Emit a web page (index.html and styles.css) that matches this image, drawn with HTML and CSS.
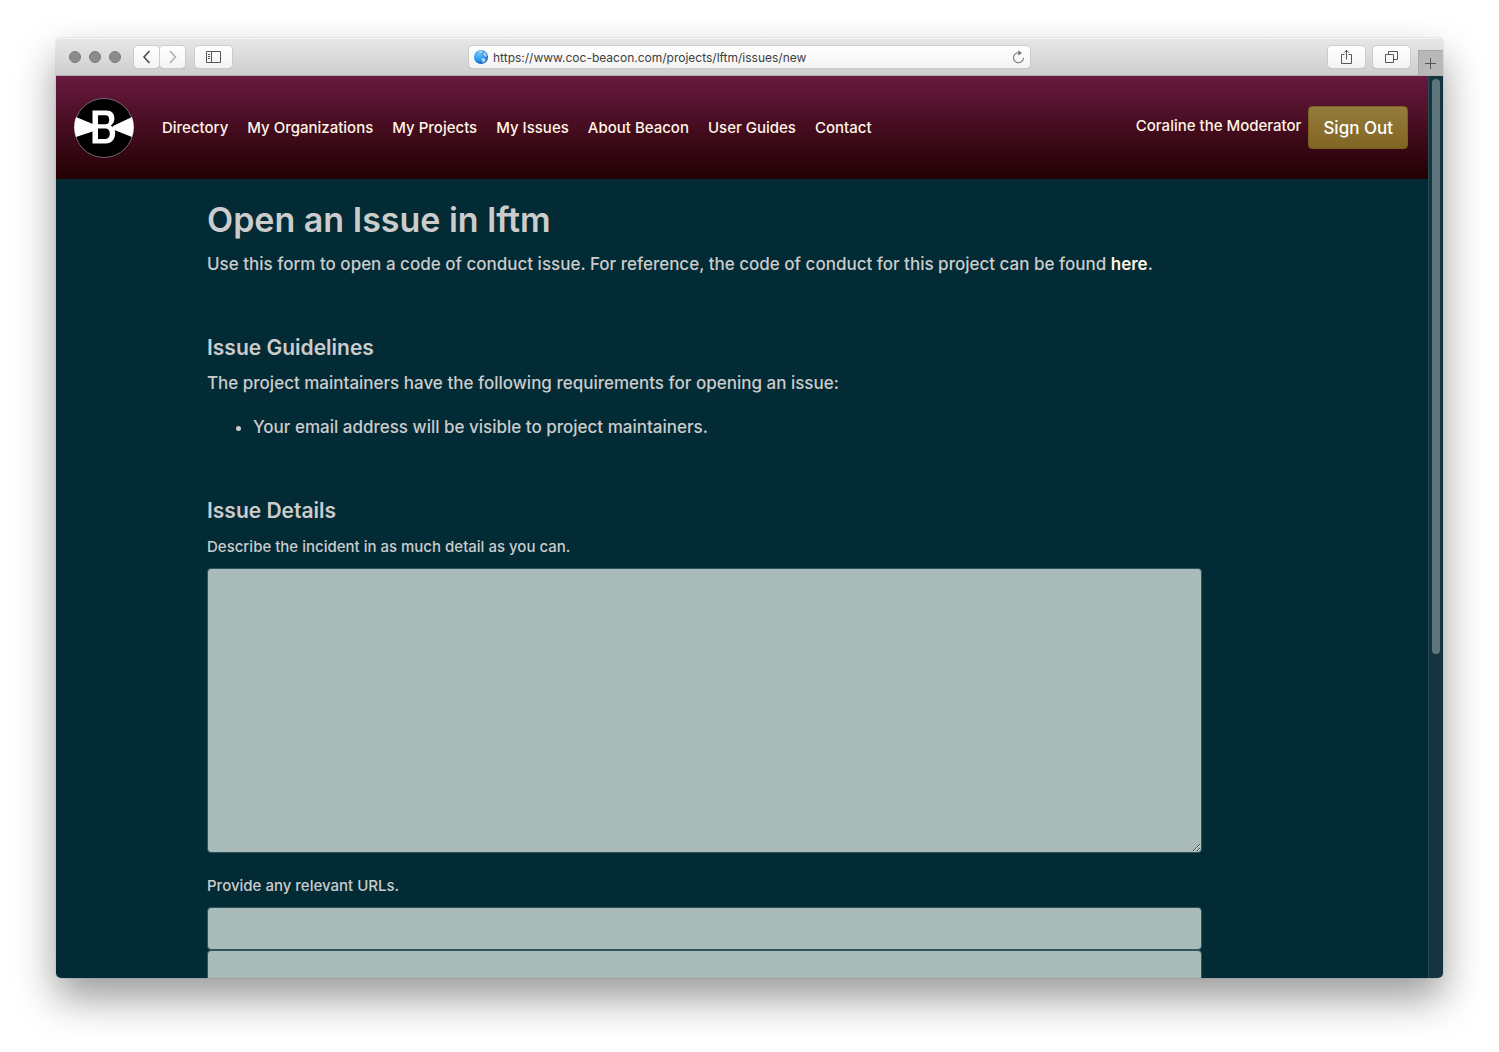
FILE: index.html
```html
<!DOCTYPE html>
<html lang="en">
<head>
<meta charset="utf-8">
<meta name="viewport" content="width=device-width, initial-scale=1">
<title>Open an Issue in lftm</title>
<link rel="stylesheet" href="styles.css">
</head>
<body>
<div class="window">
  <div class="toolbar">
    <div class="toolbar-side">
      <div class="lights"><span class="light"></span><span class="light"></span><span class="light"></span></div>
      <div class="history">
        <button class="tool tool-back" type="button" aria-label="Back"><svg width="25" height="22" viewBox="0 0 25 22"><path d="M15.500 5 10 11l5.500 6" fill="none" stroke="#4a4a4a" stroke-width="1.600"/></svg></button>
        <button class="tool tool-forward" type="button" aria-label="Forward"><svg width="25" height="22" viewBox="0 0 25 22"><path d="M10 5l5.500 6L10 17" fill="none" stroke="#b0b0b0" stroke-width="1.600"/></svg></button>
      </div>
      <button class="tool" type="button" aria-label="Show sidebar"><svg width="15" height="12" viewBox="0 0 15 12" fill="none" stroke="#555"><path d="M.5.5h14v11H.5zM5.500.5v11M2 3.500h2M2 5.500h2M2 7.500h2"/></svg></button>
    </div>
    <div class="address">
      <svg class="globe" width="14" height="14" viewBox="0 0 14 14"><defs><radialGradient id="sea" cx=".35" cy=".3" r=".8"><stop offset="0" stop-color="#6dc3fa"/><stop offset=".6" stop-color="#2191ee"/><stop offset="1" stop-color="#0f4f9c"/></radialGradient></defs><circle cx="7" cy="7" r="7" fill="url(#sea)"/><path d="M4.500 1.500 7 .500l2 .7-1 1.600-2 .5zM7.200 8.500l3-.6 1.600 1.600-1.400 2.500-1.500.8-.8-1.800zM9.800 2l2 1.200 1.200 2.800-1.600 1-1.800-2.200z" fill="#c4d9e6" opacity=".9"/></svg>
      <input class="address-input" type="text" aria-label="Address" value="https://www.coc-beacon.com/projects/lftm/issues/new">
      <button class="reload" type="button" aria-label="Reload"><svg width="13" height="14" viewBox="0 0 13 14"><path d="M7 2.700H6.300a5 5 0 1 0 5.200 5" fill="none" stroke="#777" stroke-width="1.100"/><path d="M6.200.3 10 2.900 6.200 5.500z" fill="#777"/></svg></button>
    </div>
    <div class="toolbar-side toolbar-end">
      <button class="tool" type="button" aria-label="Share"><svg width="11" height="16" viewBox="0 0 11 16" fill="none" stroke="#555"><path d="M3.500 5.500h-3v9h10v-9h-3M5.500 10.500V1M3 3.700l2.500-2.500L8 3.700"/></svg></button>
      <button class="tool" type="button" aria-label="Show tabs"><svg width="13" height="12" viewBox="0 0 13 12" fill="none" stroke="#555"><path d="M.5 3.500h8v8h-8zM3.500 3.500v-3h9v8h-4"/></svg></button>
      <button class="new-tab" type="button" aria-label="New tab"><svg width="11" height="11" viewBox="0 0 11 11"><path d="M5.500 0v11M0 5.500h11" stroke="#555"/></svg></button>
    </div>
  </div>
  <div class="viewport">
    <div class="page">
      <header class="site-header">
        <a class="logo" href="#" aria-label="Beacon home"><svg width="60" height="60" viewBox="0 0 60 60"><circle cx="30" cy="30" r="29.500" fill="#000" stroke="#77646d"/><path d="M2 19 20 26.500V33L2 39a30 30 0 0 1 0-20zM58 19 39 28v3.500L58 39a30 30 0 0 0 0-20z" fill="#fff"/><path fill-rule="evenodd" d="M18.500 12.500h14c5.300 0 7.900 3.300 7.900 7.800 0 3.500-1.500 6-3.700 7.200 3 1.200 4.500 4 4.500 7.500 0 6-3.500 10.500-9.200 10.500H18.500zM24 17.300v8.900h7.500c2.500 0 3.700-1.700 3.700-4.300 0-3-1.200-4.600-3.700-4.600zM24 30.500V41h7.500c2.800 0 4.300-2.200 4.300-5.200s-1.500-5.300-4.300-5.300z" fill="#fff"/></svg></a>
        <nav class="site-nav">
          <a href="#">Directory</a>
          <a href="#">My Organizations</a>
          <a href="#">My Projects</a>
          <a href="#">My Issues</a>
          <a href="#">About Beacon</a>
          <a href="#">User Guides</a>
          <a href="#">Contact</a>
        </nav>
        <div class="account">
          <a class="account-name" href="#">Coraline the Moderator</a>
          <button class="sign-out" type="button">Sign Out</button>
        </div>
      </header>
      <main class="content">
        <h1>Open an Issue in lftm</h1>
        <p class="lead">Use this form to open a code of conduct issue. For reference, the code of conduct for this project can be found <a href="#">here</a>.</p>
        <section>
          <h2>Issue Guidelines</h2>
          <p class="lead">The project maintainers have the following requirements for opening an issue:</p>
          <ul class="lead">
            <li>Your email address will be visible to project maintainers.</li>
          </ul>
        </section>
        <section>
          <h2>Issue Details</h2>
          <form>
            <label for="description">Describe the incident in as much detail as you can.</label>
            <textarea class="field" id="description"></textarea>
            <label for="url-1">Provide any relevant URLs.</label>
            <input class="field" id="url-1" type="text">
            <input class="field" id="url-2" type="text" aria-label="Another relevant URL">
          </form>
        </section>
      </main>
    </div>
    <div class="scroll-track"><div class="scroll-thumb"></div></div>
  </div>
</div>
</body>
</html>
```
FILE: styles.css
```css
* {
  box-sizing: border-box;
}

body {
  margin: 0;
  height: 100vh;
  padding: 38px 56px 74px;
  background: #fff;
  font-family: Inter, "Liberation Sans", sans-serif;
}

button,
input,
textarea {
  margin: 0;
  font: inherit;
}

svg {
  display: block;
}

.window {
  display: flex;
  flex-direction: column;
  height: 100%;
  border-radius: 5px;
  box-shadow: 0 0 1px rgba(0, 0, 0, 0.5), 0 20px 40px rgba(0, 0, 0, 0.4);
  overflow: hidden;
}

/* Browser toolbar */
.toolbar {
  display: grid;
  grid-template-columns: 1fr 561px 1fr;
  align-items: center;
  flex: none;
  height: 38px;
  background: linear-gradient(#e7e7e7, #cecece);
  border-top: 1px solid #f4f4f4;
  border-bottom: 1px solid #b3aeb0;
}

.toolbar-side {
  display: flex;
  align-items: center;
  height: 100%;
  padding-left: 13px;
}

.lights {
  display: flex;
  gap: 8px;
  margin-right: 13px;
}

.light {
  width: 12px;
  height: 12px;
  border: 1px solid #79787c;
  border-radius: 50%;
  background: #8c8b90;
}

.history {
  display: flex;
  gap: 1px;
  margin-right: 10px;
}

.tool {
  display: flex;
  align-items: center;
  justify-content: center;
  width: 37px;
  height: 22px;
  padding: 0;
  border: 0;
  border-radius: 4px;
  background: linear-gradient(#fff, #f3f3f3);
  box-shadow: 0 0 0 1px #cbcbcb, 0 1px 1px #aaa;
}

.tool-back,
.tool-forward {
  width: 25px;
}

.address {
  display: flex;
  align-items: center;
  gap: 5px;
  height: 22px;
  padding: 0 5px;
  border-radius: 4px;
  background: linear-gradient(#fff, #f3f3f3);
  box-shadow: 0 0 0 1px #cbcbcb, 0 1px 1px #aaa;
}

.address-input {
  flex: 1;
  min-width: 0;
  padding: 0;
  border: 0;
  background: none;
  color: #404040;
  font-size: 12px;
}

.reload {
  padding: 0;
  border: 0;
  background: none;
}

.toolbar-end {
  justify-content: flex-end;
  gap: 8px;
}

.new-tab {
  display: flex;
  align-items: center;
  justify-content: center;
  align-self: flex-end;
  width: 25px;
  height: 25px;
  padding: 0 1px 0 0;
  border: 0;
  border-top: 1px solid #a8a8a8;
  border-left: 1px solid #a8a8a8;
  background: #b8b8b8;
}

/* Web page */
.viewport {
  display: flex;
  flex: 1;
  min-height: 0;
}

.page {
  flex: 1;
  min-width: 0;
  overflow: hidden;
  background: #022b35;
  color: #cccccc;
}

.scroll-track {
  width: 15px;
  padding: 3px 3px 0;
  border-left: 1px solid #2b4b54;
  background: #14353f;
}

.scroll-thumb {
  width: 8px;
  height: 64%;
  border-radius: 4px;
  background: #5d757b;
}

.site-header {
  display: flex;
  align-items: center;
  height: 103px;
  padding: 0 20px 0 18px;
  background: linear-gradient(#68193f, #220001);
  color: #fff5e4;
}

.site-header a {
  color: inherit;
  text-decoration: none;
}

.site-nav {
  display: flex;
  flex: 1;
  gap: 19px;
  margin-left: 28px;
  font-size: 15px;
  font-weight: 500;
}

.account {
  display: flex;
  align-items: center;
  gap: 7px;
  font-size: 15px;
  font-weight: 500;
}

.account-name {
  padding-bottom: 4px;
}

.sign-out {
  height: 43px;
  padding: 0 14px;
  border: 1px solid #7b6021;
  border-radius: 4px;
  background: linear-gradient(#937b3e, #826522);
  color: #fff;
  font-size: 17px;
  font-weight: 500;
}

.content {
  padding: 19px 226px 0 151px;
}

h1,
h2,
p,
ul {
  margin: 0;
}

h1 {
  margin-bottom: 9px;
  font-size: 34px;
  font-weight: 600;
  line-height: 43px;
}

.lead {
  font-size: 17px;
  font-weight: 500;
  line-height: 28px;
}

.lead a {
  color: #fff5e4;
  font-weight: 600;
  text-decoration: none;
}

section {
  margin-top: 56px;
}

h2 {
  margin-bottom: 8px;
  font-size: 21px;
  font-weight: 600;
  line-height: 27px;
}

ul {
  margin-top: 16px;
  padding-left: 46px;
}

label {
  display: block;
  margin-bottom: 8px;
  font-size: 15px;
  font-weight: 500;
  line-height: 26px;
}

form {
  padding-top: 2px;
}

.field {
  display: block;
  width: 100%;
  height: 43px;
  padding: 6px 12px;
  border: 1px solid #2f545c;
  border-radius: 4px;
  background: #a8bbb9;
  font-size: 16px;
}

textarea.field {
  height: 285px;
  margin-bottom: 20px;
}
```
